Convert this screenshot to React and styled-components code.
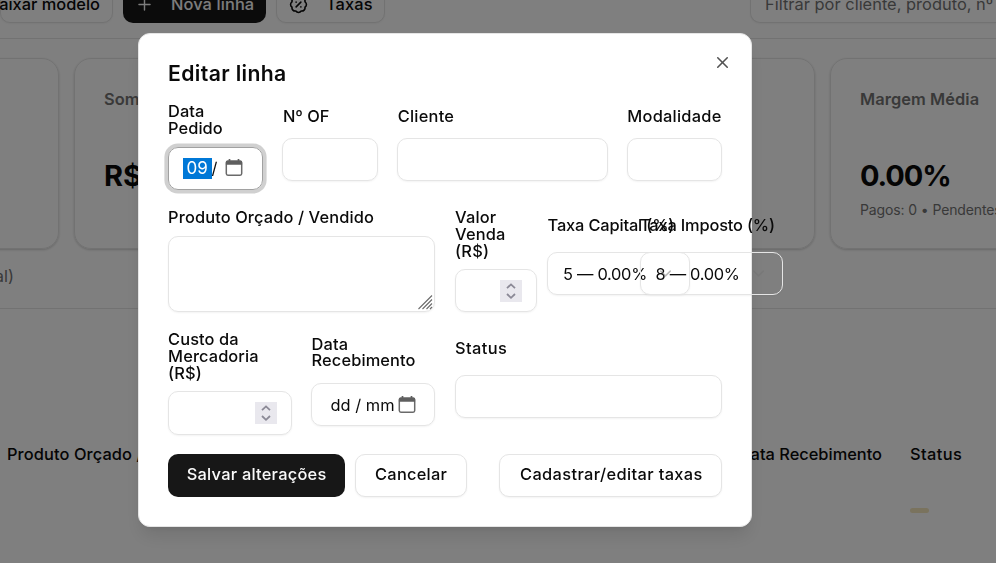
import React from "react";
import styled, { createGlobalStyle, css } from "styled-components";
import { X, Plus, BadgePercent, ChevronDown } from "lucide-react";

const GlobalStyle = createGlobalStyle`
  *, *::before, *::after { box-sizing: border-box; }
  html, body { margin: 0; overflow: hidden; background: #fff; }
  body {
    font-family: Inter, "Liberation Sans", sans-serif;
    font-size: 16.4px;
    color: #0a0a0a;
  }
`;

const T = styled.span`
  white-space: nowrap;
  letter-spacing: ${(p) => p.$ls || 0}px;
`;

const Page = styled.div`
  width: 996px;
  height: 563px;
  overflow: hidden;
  display: flex;
  flex-direction: column;
`;

const Toolbar = styled.div`
  height: 39px;
  flex: none;
  display: flex;
  align-items: flex-end;
  padding-bottom: 15px;
  border-bottom: 1px solid #e5e5e5;
`;

const outlined = css`
  background: #fff;
  border: 1px solid #e5e5e5;
  box-shadow: 0 1px 2px rgba(0, 0, 0, 0.05);
`;

const Button = styled.button`
  height: 43px;
  width: ${(p) => p.$w}px;
  flex: none;
  display: flex;
  align-items: center;
  justify-content: ${(p) => p.$justify || "center"};
  gap: ${(p) => p.$gap || 0}px;
  padding: ${(p) => p.$pad || "0 0 2px 1px"};
  border: 0;
  border-radius: 10px;
  font: inherit;
  font-weight: 500;
  color: ${(p) => (p.$primary ? "#fafafa" : "#0a0a0a")};
  background: #171717;
  ${(p) => !p.$primary && outlined}
`;

const ToolbarButton = styled(Button)`
  margin-right: ${(p) => p.$mr || 0}px;
`;

const FilterInput = styled.div`
  ${outlined}
  margin-left: auto;
  flex: none;
  width: 246px;
  height: 43px;
  border-radius: 10px 0 0 10px;
  border-right: 0;
  padding: 5px 0 0 14px;
  display: flex;
  align-items: center;
  color: #737373;
`;

const Cards = styled.div`
  display: flex;
  gap: 15px;
  margin: 19px 0 0 -178px;
`;

const Card = styled.section`
  flex: none;
  width: 237px;
  height: 191px;
  padding: 28px 29px;
  border: 1px solid #e5e5e5;
  border-radius: 17px;
  box-shadow: 0 1px 3px rgba(0, 0, 0, 0.1), 0 1px 2px rgba(0, 0, 0, 0.1);
  white-space: nowrap;
`;

const CardTitle = styled.div`
  line-height: 24px;
  font-weight: 600;
  color: #737373;
`;

const CardValue = styled.div`
  margin-top: 47px;
  font-size: 29px;
  line-height: 36px;
  font-weight: 700;
`;

const CardNote = styled.div`
  margin-top: 6px;
  font-size: 14px;
  line-height: 20px;
  color: #737373;
`;

const Caption = styled.div`
  height: 60px;
  padding-top: 15px;
  line-height: 24px;
  color: #737373;
  border-bottom: 1px solid #e5e5e5;
`;

const ClippedStart = styled.div`
  width: ${(p) => p.$w}px;
  flex: none;
  display: flex;
  justify-content: flex-end;
`;

const TableHead = styled.div`
  display: flex;
  margin-top: 133px;
  line-height: 24px;
  font-weight: 500;
`;

const HeadCell = styled.div`
  flex: none;
  width: ${(p) => p.$w}px;
  padding-left: ${(p) => p.$pl || 0}px;
  padding-right: ${(p) => p.$pr || 0}px;
  text-align: ${(p) => p.$align || "left"};
`;

const Badge = styled.div`
  width: 19px;
  height: 5px;
  margin: 42px 0 0 910px;
  border-radius: 3px;
  background: #f5e6bc;
`;

const Overlay = styled.div`
  position: fixed;
  inset: 0;
  background: rgba(0, 0, 0, 0.5);
`;

const Dialog = styled.div`
  position: fixed;
  left: 137.8px;
  top: 33px;
  width: 614.4px;
  height: 494px;
  padding: 28.8px;
  display: flex;
  flex-direction: column;
  gap: 19.2px;
  background: #fff;
  border: 1px solid #e5e5e5;
  border-radius: 12px;
  box-shadow: 0 12px 18px -3.6px rgba(0, 0, 0, 0.1), 0 4.8px 7.2px -4.8px rgba(0, 0, 0, 0.1);
`;

const Title = styled.h2`
  margin: 0;
  padding-left: 0.5px;
  height: 21.5px;
  line-height: 21.6px;
  font-size: 21.2px;
  font-weight: 600;
`;

const CloseButton = styled.button`
  position: absolute;
  right: 19px;
  top: 19px;
  padding: 0;
  border: 0;
  background: none;
  color: #0a0a0a;
  opacity: 0.7;
  display: flex;
`;

const Grid = styled.div`
  display: grid;
  grid-template-columns: repeat(${(p) => p.$cols}, minmax(0, 1fr));
  gap: ${(p) => p.$gap || 19.2}px;
  grid-column: span ${(p) => p.$span || 1};
`;

const Field = styled.div`
  display: grid;
  gap: 9.6px;
  min-width: 0;
  grid-column: span ${(p) => p.$span || 1};
`;

const Label = styled.label`
  display: flex;
  flex-direction: column;
  justify-content: center;
  padding-left: 0.5px;
  line-height: 16.8px;
  font-weight: 500;
`;

const Control = styled.div`
  height: ${(p) => p.$h || 43.2}px;
  width: ${(p) => (p.$w ? `${p.$w}px` : "100%")};
  display: flex;
  align-items: center;
  justify-content: ${(p) => p.$justify || "flex-start"};
  padding: ${(p) => p.$pad || "0 14px"};
  border: 1px solid #e5e5e5;
  border-radius: 10px;
  box-shadow: 0 1px 2px rgba(0, 0, 0, 0.05);
  ${(p) =>
    p.$focused &&
    css`
      border-color: #a1a1a1;
      box-shadow: 0 0 0 3.6px rgba(161, 161, 161, 0.5);
    `}
`;

const TextArea = styled(Control)`
  align-items: flex-end;
  justify-content: flex-end;
  padding: 1px;
`;

const SelectedPart = styled.span`
  background: #0078d7;
  color: #fff;
  width: 29px;
  height: 21px;
  line-height: 21px;
  text-align: center;
  font-size: 17px;
`;

const DateText = styled.span`
  white-space: pre;
  margin-right: ${(p) => p.$mr}px;
`;

const SpinBox = styled.span`
  width: 22px;
  height: 22px;
  margin-left: auto;
  background: #e9e8ee;
  display: flex;
`;

const Actions = styled.div`
  display: flex;
  gap: 10px;
`;

const PushedButton = styled(Button)`
  margin-left: auto;
`;

const Calendar = () => (
  <svg width="18" height="18" viewBox="0 0 18 18" fill="none">
    <path d="M4.5 0v3M13.5 0v3" stroke="#5f5f5f" strokeWidth="1.7" />
    <rect x="1.3" y="2.2" width="15.4" height="14" rx="1.6" stroke="#6a6a6a" strokeWidth="1.5" />
    <path d="M2.4 1.5h13.2a1.5 1.5 0 0 1 1.5 1.5v2.8H0.9V3a1.5 1.5 0 0 1 1.5-1.5z" fill="#5f5f5f" />
  </svg>
);

const Spinner = () => (
  <SpinBox>
    <svg width="22" height="22" viewBox="0 0 22 22" fill="none" stroke="#8b8996" strokeWidth="1.8">
      <path d="M7 8.2l4-3.8 4 3.8M7 14l4 3.8 4-3.8" />
    </svg>
  </SpinBox>
);

const Grip = () => (
  <svg width="15" height="15" viewBox="0 0 15 15" stroke="#6c6c6c" strokeWidth="1.1">
    <path d="M0.5 14L14 0.5M4.5 14L14 4.5M8.5 14L14 8.5M12 14L14 12" />
  </svg>
);

function LabeledField({ lines, ls, span, children }) {
  return (
    <Field $span={span}>
      <Label>
        {lines.map((line) => (
          <T key={line} $ls={ls}>{line}</T>
        ))}
      </Label>
      {children}
    </Field>
  );
}

function Select({ value }) {
  return (
    <Control $w={143} $pad="0 14px 0 15px" $justify="space-between">
      <T $ls={-0.3}>{value}</T>
      <ChevronDown size={19} strokeWidth={1.8} color="#737373" opacity={0.5} />
    </Control>
  );
}

export default function App() {
  return (
    <>
      <GlobalStyle />
      <Page>
        <Toolbar>
          <ToolbarButton $w={113} $mr={10} $justify="flex-end" $pad="5px 12px 0 0">
            <T>Baixar modelo</T>
          </ToolbarButton>
          <ToolbarButton $primary $w={143} $mr={10} $gap={17} $justify="flex-start" $pad="5px 0 0 12px">
            <Plus size={19} strokeWidth={1.8} />
            <T $ls={0.1}>Nova linha</T>
          </ToolbarButton>
          <ToolbarButton $w={109} $gap={18} $justify="flex-start" $pad="5px 0 0 12px">
            <BadgePercent size={19} strokeWidth={2} />
            <T $ls={0.1}>Taxas</T>
          </ToolbarButton>
          <FilterInput><T $ls={0.02}>Filtrar por cliente, produto, nº OF</T></FilterInput>
        </Toolbar>
        <Cards>
          <Card />
          <Card>
            <CardTitle>Soma Vendas</CardTitle>
            <CardValue>R$ 0,00</CardValue>
          </Card>
          <Card />
          <Card />
          <Card>
            <CardTitle><T $ls={0.08}>Margem Média</T></CardTitle>
            <CardValue><T $ls={-1.1}>0.00%</T></CardValue>
            <CardNote><T $ls={-0.12}>Pagos: 0 • Pendentes: 0</T></CardNote>
          </Card>
        </Cards>
        <Caption>
          <ClippedStart $w={14}><T>(total)</T></ClippedStart>
        </Caption>
        <TableHead>
          <HeadCell $w={500} $pl={7}><T $ls={0.1}>Produto Orçado / Vendido</T></HeadCell>
          <HeadCell $w={410} $pr={28} $align="right"><T>Data Recebimento</T></HeadCell>
          <HeadCell $w={86}><T $ls={0.4}>Status</T></HeadCell>
        </TableHead>
        <Badge />
      </Page>
      <Overlay />
      <Dialog role="dialog">
        <Title><T $ls={0.35}>Editar linha</T></Title>
        <Grid $cols={5}>
          <LabeledField lines={["Data", "Pedido"]} ls={0.05}>
            <Control $focused>
              <SelectedPart>09</SelectedPart>
              <DateText $mr={7}>/</DateText>
              <Calendar />
            </Control>
          </LabeledField>
          <LabeledField lines={["Nº OF"]}><Control /></LabeledField>
          <LabeledField lines={["Cliente"]} ls={0.25} span={2}><Control /></LabeledField>
          <LabeledField lines={["Modalidade"]} ls={0.25}><Control /></LabeledField>
        </Grid>
        <Grid $cols={2}>
          <LabeledField lines={["Produto Orçado / Vendido"]} ls={0.12}>
            <TextArea $h={76.4}><Grip /></TextArea>
          </LabeledField>
          <Grid $cols={3} $gap={9.6}>
            <LabeledField lines={["Valor", "Venda", "(R$)"]} ls={0.15}><Control><Spinner /></Control></LabeledField>
            <LabeledField lines={["Taxa Capital (%)"]} ls={-0.15}><Select value="5 — 0.00%" /></LabeledField>
            <LabeledField lines={["Taxa Imposto (%)"]} ls={-0.17}><Select value="8 — 0.00%" /></LabeledField>
          </Grid>
        </Grid>
        <Grid $cols={4}>
          <LabeledField lines={["Custo da", "Mercadoria", "(R$)"]} ls={0.1}><Control><Spinner /></Control></LabeledField>
          <LabeledField lines={["Data", "Recebimento"]} ls={0.12}>
            <Control $pad="0 0 0 18.5px">
              <DateText $mr={3}>dd / mm</DateText>
              <Calendar />
            </Control>
          </LabeledField>
          <LabeledField lines={["Status"]} ls={0.4} span={2}><Control /></LabeledField>
        </Grid>
        <Actions>
          <Button $primary $w={177}><T $ls={0.25}>Salvar alterações</T></Button>
          <Button $w={112}><T $ls={0.25}>Cancelar</T></Button>
          <PushedButton $w={223}><T $ls={0.38}>Cadastrar/editar taxas</T></PushedButton>
        </Actions>
        <CloseButton aria-label="Fechar"><X size={19} strokeWidth={2} /></CloseButton>
      </Dialog>
    </>
  );
}
